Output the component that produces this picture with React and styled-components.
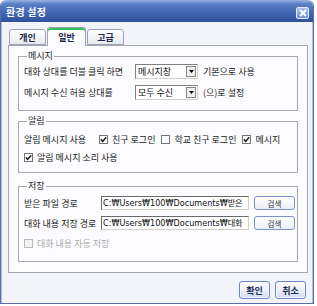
import React from 'react'
import styled, { createGlobalStyle } from 'styled-components'

const Global = createGlobalStyle`
  html, body { margin: 0; padding: 0; background: #ffffff; }
  body { font-family: "Noto Sans CJK KR", "Noto Sans", sans-serif; font-size: 9px; color: #222; }
  * { box-sizing: border-box; }
`

const Window = styled.div`
  width: 314px;
  height: 304px;
  display: flex;
  flex-direction: column;
  border: 1px solid #5a6fa6;
  border-top: none;
  border-radius: 6px 6px 0 0;
  background: #f3f4fb;
  overflow: hidden;
`

const TitleBar = styled.div`
  height: 22px;
  flex: none;
  display: flex;
  align-items: center;
  justify-content: space-between;
  padding: 0 4px 0 5px;
  background: linear-gradient(to bottom, #9bb3e2 0%, #5a7fc6 18%, #4468b4 55%, #2f519c 100%);
  border-radius: 6px 6px 0 0;
  color: #fff;
  font-size: 10px;
  font-weight: bold;
  letter-spacing: 0.2px;
`

const CloseButton = styled.div`
  width: 13px;
  height: 12px;
  margin-top: 4px;
  border: 1px solid #e8efff;
  border-radius: 2px;
  background: linear-gradient(to bottom, #a9c2ee, #6a90d6);
  display: flex;
  align-items: center;
  justify-content: center;
`

const Body = styled.div`
  flex: 1;
  display: flex;
  flex-direction: column;
  padding: 5px 5px 0 6px;
  border-left: 1px solid #b5bdd8;
  border-right: 1px solid #b5bdd8;
`

const TabRow = styled.div`
  display: flex;
  align-items: flex-end;
  height: 18px;
  padding-left: 1px;
  gap: 1px;
  position: relative;
  z-index: 1;
`

const Tab = styled.div`
  width: ${({ $active }) => ($active ? 39 : 37)}px;
  height: ${({ $active }) => ($active ? 19 : 16)}px;
  margin-bottom: ${({ $active }) => ($active ? -1 : 0)}px;
  display: flex;
  align-items: center;
  justify-content: center;
  font-weight: bold;
  font-size: 9px;
  color: #1d2a4a;
  border: 1px solid #9ea3b4;
  border-bottom: ${({ $active }) => ($active ? 'none' : '1px solid #9ea3b4')};
  border-radius: 3px 3px 0 0;
  background: ${({ $active }) => ($active ? '#fcfcfe' : 'linear-gradient(to bottom, #ffffff, #e9eaf0)')};
  box-shadow: ${({ $active }) => ($active ? 'inset 0 2px 0 #2fc35a' : 'none')};
  padding-top: ${({ $active }) => ($active ? 1 : 0)}px;
`

const Panel = styled.div`
  width: 300px;
  height: 228px;
  flex: none;
  border: 1px solid #a2a6b6;
  background: #fcfcfe;
  padding: 5px 9px 0 9px;
  display: flex;
  flex-direction: column;
`

const Group = styled.fieldset`
  margin: ${({ $top }) => $top}px 0 0 0;
  padding: ${({ $pad }) => $pad};
  border: 1px solid #aaaaaa;
  min-width: 0;
  display: flex;
  flex-direction: column;
`

const Legend = styled.legend`
  padding: 0 1px;
  margin-left: 3px;
  line-height: 10px;
  font-size: 9px;
  color: #222;
`

const Row = styled.div`
  height: ${({ $h }) => $h}px;
  display: flex;
  align-items: center;
  gap: ${({ $gap }) => $gap || 0}px;
`

const Label = styled.span`
  width: ${({ $w }) => $w}px;
  flex: none;
  white-space: nowrap;
`

const Text = styled.span`
  white-space: nowrap;
  color: ${({ $disabled }) => ($disabled ? '#a9a9a9' : '#222')};
`

const Combo = styled.div`
  width: 63px;
  height: 15px;
  flex: none;
  display: flex;
  align-items: center;
  border: 1px solid #808080;
  border-right-color: #d4d0c8;
  border-bottom-color: #d4d0c8;
  background: #fff;
  padding: 1px;
  margin-right: 5px;
`

const ComboText = styled.span`
  flex: 1;
  padding-left: 1px;
  white-space: nowrap;
  overflow: hidden;
  color: #111;
`

const ComboArrow = styled.div`
  width: 10px;
  height: 11px;
  flex: none;
  border: 1px solid #888;
  background: #efefef;
  display: flex;
  align-items: center;
  justify-content: center;
`

const CheckItem = styled.span`
  display: inline-flex;
  align-items: center;
  gap: 4px;
  white-space: nowrap;
  color: ${({ $disabled }) => ($disabled ? '#a9a9a9' : '#222')};
`

const Box = styled.span`
  width: 9px;
  height: 9px;
  flex: none;
  border: 1px solid ${({ $disabled }) => ($disabled ? '#b8b8b8' : '#767676')};
  background: ${({ $disabled }) => ($disabled ? '#f2f2f2' : '#fff')};
  display: flex;
  align-items: center;
  justify-content: center;
`

const PathInput = styled.div`
  width: 148px;
  height: 14px;
  flex: none;
  border: 1px solid #6b6b6b;
  border-right-color: #d4d0c8;
  border-bottom-color: #d4d0c8;
  background: #fff;
  padding: 0 1px;
  font-family: "DejaVu Sans", "Noto Sans CJK KR", sans-serif;
  font-size: 8.1px;
  line-height: 12px;
  white-space: nowrap;
  overflow: hidden;
  color: #111;
`

const SmallButton = styled.div`
  width: 41px;
  height: 14px;
  flex: none;
  margin-left: 5px;
  border: 1px solid #7d93c6;
  border-radius: 3px;
  background: linear-gradient(to bottom, #ffffff, #eceff8);
  display: flex;
  align-items: center;
  justify-content: center;
  font-size: 7.5px;
  color: #333;
`

const Footer = styled.div`
  display: flex;
  justify-content: flex-end;
  gap: 5px;
  padding-top: 8px;
  padding-right: 1px;
`

const DialogButton = styled.div`
  width: 31px;
  height: 18px;
  border: 1px solid #6a86c4;
  border-radius: 3px;
  background: linear-gradient(to bottom, #ffffff 0%, #e7ecf8 60%, #cfd9f0 100%);
  box-shadow: inset 0 0 0 1px #f7f9ff;
  display: flex;
  align-items: center;
  justify-content: center;
  font-weight: bold;
  font-size: 9px;
  color: #1e2f5a;
`

function Check ({ checked, disabled, children }) {
  return <CheckItem $disabled={disabled}>
    <Box $disabled={disabled}>
      {checked && <svg width='7' height='7' viewBox='0 0 7 7'>
        <path d='M0.8 3.4 L2.7 5.3 L6.2 1.2' fill='none' stroke='#222' strokeWidth='1.5' />
      </svg>}
    </Box>
    {children}
  </CheckItem>
}

function Select ({ value }) {
  return <Combo>
    <ComboText>{value}</ComboText>
    <ComboArrow>
      <svg width='5' height='3' viewBox='0 0 5 3'><path d='M0 0 H5 L2.5 3 Z' fill='#000' /></svg>
    </ComboArrow>
  </Combo>
}

export default function App () {
  return <>
    <Global />
    <Window>
      <TitleBar>
        <span>환경 설정</span>
        <CloseButton>
          <svg width='8' height='8' viewBox='0 0 8 8'>
            <path d='M1 1 L7 7 M7 1 L1 7' stroke='#fff' strokeWidth='1.8' />
          </svg>
        </CloseButton>
      </TitleBar>
      <Body>
        <TabRow>
          <Tab>개인</Tab>
          <Tab $active>일반</Tab>
          <Tab>고급</Tab>
        </TabRow>
        <Panel>
          <Group $top={0} $pad='0 8px 7px 5px'>
            <Legend>메시지</Legend>
            <Row $h={21}>
              <Label $w={111}>대화 상대를 더블 클릭 하면</Label>
              <Select value='메시지창' />
              <Text>기본으로 사용</Text>
            </Row>
            <Row $h={21}>
              <Label $w={111}>메시지 수신 허용 상대를</Label>
              <Select value='모두 수신' />
              <Text>(으)로 설정</Text>
            </Row>
          </Group>
          <Group $top={5} $pad='4px 8px 6px 5px'>
            <Legend>알림</Legend>
            <Row $h={18} $gap={6}>
              <Label $w={69}>알림 메시지 사용</Label>
              <Check checked>친구 로그인</Check>
              <Check>학교 친구 로그인</Check>
              <Check checked>메시지</Check>
            </Row>
            <Row $h={18}>
              <Check checked>알림 메시지 소리 사용</Check>
            </Row>
          </Group>
          <Group $top={8} $pad='2px 8px 8px 5px'>
            <Legend>저장</Legend>
            <Row $h={20}>
              <Label $w={77}>받은 파일 경로</Label>
              <PathInput>C:₩Users₩100₩Documents₩받은</PathInput>
              <SmallButton>검색</SmallButton>
            </Row>
            <Row $h={20}>
              <Label $w={77}>대화 내용 저장 경로</Label>
              <PathInput>C:₩Users₩100₩Documents₩대화</PathInput>
              <SmallButton>검색</SmallButton>
            </Row>
            <Row $h={20}>
              <Check disabled>대화 내용 자동 저장</Check>
            </Row>
          </Group>
        </Panel>
        <Footer>
          <DialogButton>확인</DialogButton>
          <DialogButton>취소</DialogButton>
        </Footer>
      </Body>
    </Window>
  </>
}
